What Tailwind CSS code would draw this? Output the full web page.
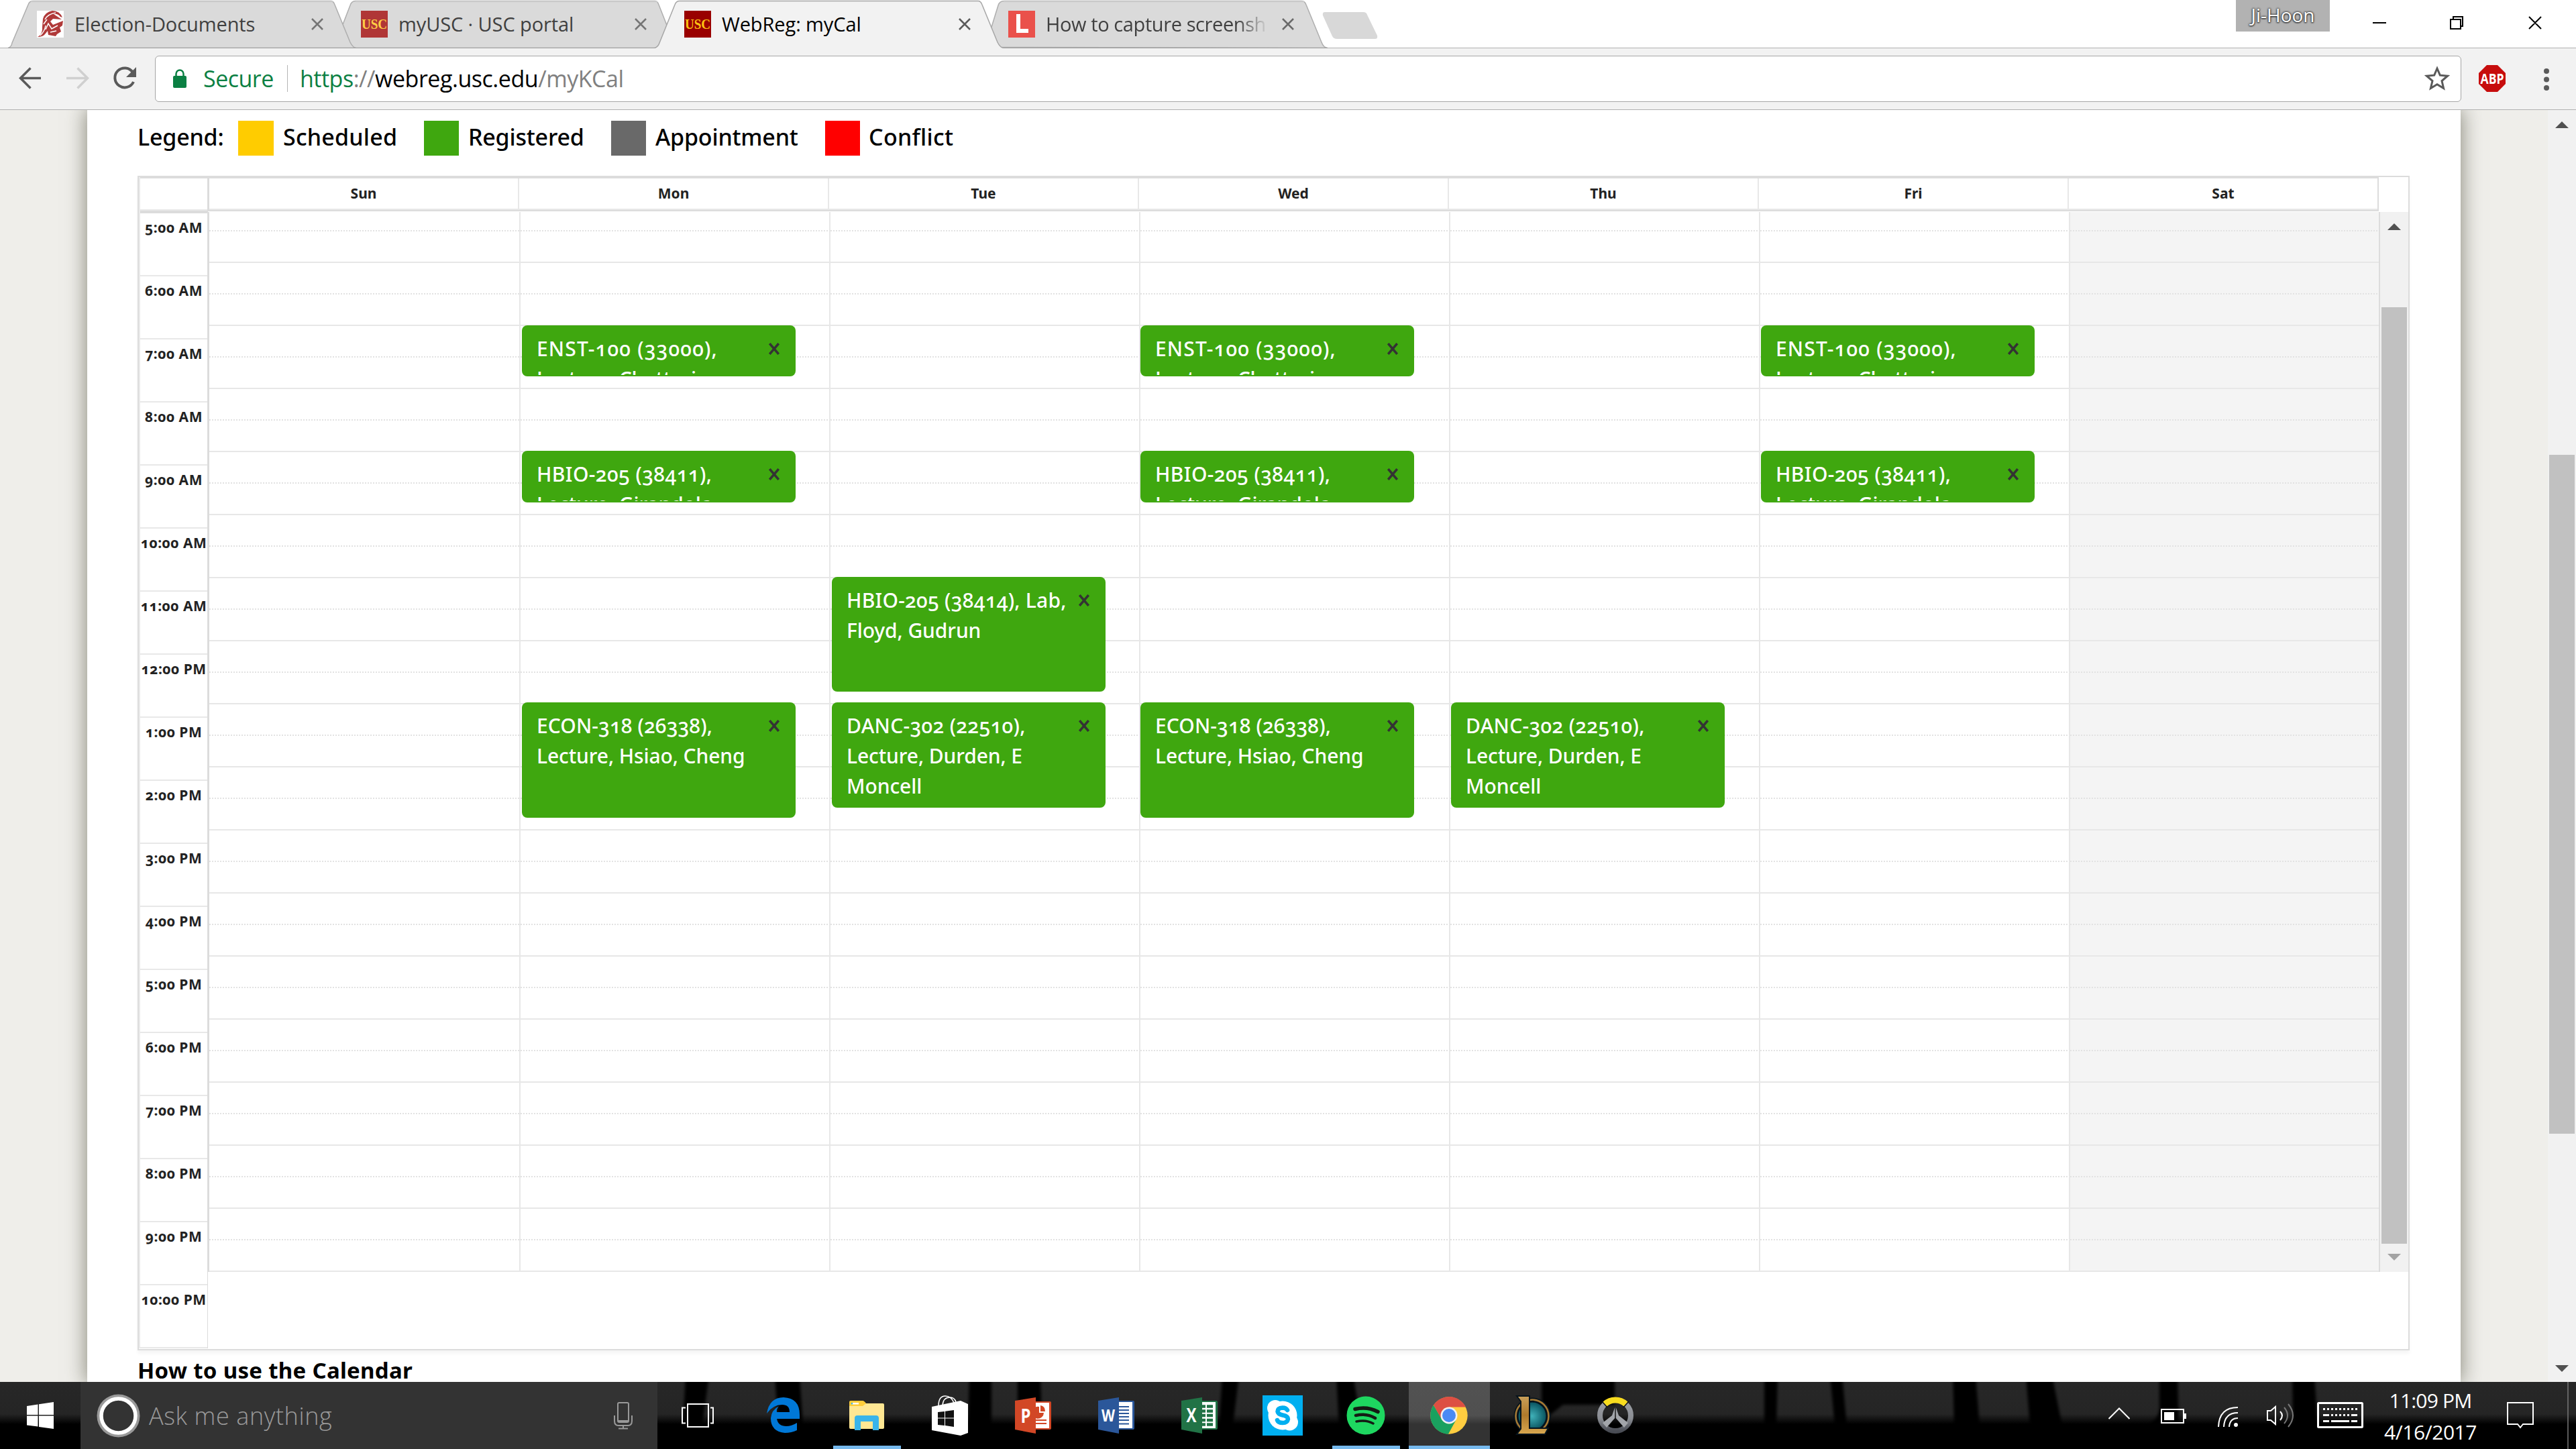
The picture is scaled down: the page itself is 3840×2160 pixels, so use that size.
<!DOCTYPE html>
<html lang="en">
<head>
<meta charset="utf-8">
<title>WebReg: myCal</title>
<script src="https://cdn.jsdelivr.net/npm/@tailwindcss/browser@4"></script>
</head>
<body class="w-[3840px] h-[2160px] overflow-hidden bg-white font-['Open_Sans','Noto_Sans',sans-serif] text-black">
<div class="flex flex-col w-[3840px] h-[2160px]">

  <!-- tab strip -->
  <header class="relative h-[72px] flex-none flex items-center bg-white text-[29px] tracking-[-0.1px] text-[#404040] whitespace-nowrap">
    <svg class="absolute inset-0" width="3840" height="72" viewBox="0 0 3840 72">
      <path d="M0 71.5H3840" stroke="#b0b0b0"/>
      <path d="M1463 70.5C1469 70 1470 67 1471 63L1488 8Q1490 1.500 1497 1.500H1940Q1945 1.500 1947 7L1970 63Q1973 71 1979 71.500Z" fill="#dadada" stroke="#aeaeae" stroke-width="1.500"/>
      <path d="M498 70.500L522 8Q524 1.500 530 1.500H976Q980 1.500 982 7L1004 63L1012 71.500H498Z" fill="#dadada" stroke="#aeaeae" stroke-width="1.500"/>
      <path d="M12 71.500Q17 70 18 64L42 7Q44 1.500 49 1.500H493Q497 1.500 499 7L522 63Q526 71 531 71.500Z" fill="#dadada" stroke="#aeaeae" stroke-width="1.500"/>
      <path d="M46 2.500H496M530 2.500H980M1496 2.500H1944" stroke="#cfcfcf" stroke-width="2"/>
      <path d="M12 71.500H980M1495 71.500H1979" stroke="#9c9c9c"/>
      <path d="M976 72Q981 70 983 64L1006 7Q1008 1.500 1013 1.500H1458Q1462 1.500 1464 7L1487 63Q1491 71 1496 72V73H976Z" fill="#f2f2f2"/>
      <path d="M976 71.500Q981 70 983 64L1006 7Q1008 1.500 1013 1.500H1458Q1462 1.500 1464 7L1487 63Q1491 71 1496 71.500" fill="none" stroke="#a6a6a6" stroke-width="1.500"/>
      <path d="M1975 18H2032Q2037 18 2038 22L2053 53Q2054 58 2050 58H1993Q1988 58 1986 54L1972 23Q1971 18 1975 18Z" fill="#d8d8d8"/>
    </svg>
    <div class="relative flex items-center ml-[55px] w-[483px]">
      <svg class="w-10 h-10 mr-4" viewBox="0 0 40 40"><path fill="#fff" d="M0 0H40V40H0Z"/><path fill="#b03a3a" d="M1 39Q9 35 8 24L9 12Q12 2 23 0Q34 0 38 10L35 9Q31 4 25 5L37 13L24 12L20 16L24 21L39 15L38 22L34 25L36 31L30 35L28 38L17 36L16 30L12 35Q9 39 1 39Z"/><path stroke="#fff" stroke-width="1.500" fill="none" d="M12 13Q16 5 28 3M13 28L17 19L22 27L31 22M20 32L29 30M10 20L15 13M5 37Q12 30 13 22"/></svg>
      <span>Election-Documents</span>
      <svg class="absolute left-[408px] w-5 h-5" viewBox="0 0 20 20"><path d="M2 2L18 18M18 2L2 18" stroke="#757575" stroke-width="2.500"/></svg>
    </div>
    <div class="relative flex items-center w-[482px]">
      <svg class="w-10 h-10 mr-4" viewBox="0 0 40 40"><path fill="#b03636" d="M0 0H40V40H0Z"/><text x="20" y="27" text-anchor="middle" font-family="Liberation Serif" font-weight="700" font-size="21" textLength="38" lengthAdjust="spacingAndGlyphs" fill="#ffce45">USC</text></svg>
      <span>myUSC · USC portal</span>
      <svg class="absolute left-[407px] w-5 h-5" viewBox="0 0 20 20"><path d="M2 2L18 18M18 2L2 18" stroke="#757575" stroke-width="2.500"/></svg>
    </div>
    <div class="relative flex items-center w-[483px] text-black">
      <svg class="w-10 h-10 mr-4" viewBox="0 0 40 40"><path fill="#990000" d="M0 0H40V40H0Z"/><text x="20" y="27" text-anchor="middle" font-family="Liberation Serif" font-weight="700" font-size="21" textLength="38" lengthAdjust="spacingAndGlyphs" fill="#ffc312">USC</text></svg>
      <span>WebReg: myCal</span>
      <svg class="absolute left-[408px] w-5 h-5" viewBox="0 0 20 20"><path d="M2 2L18 18M18 2L2 18" stroke="#5a5a5a" stroke-width="2.500"/></svg>
    </div>
    <div class="relative flex items-center w-[483px]">
      <svg class="w-10 h-10 mr-4 flex-none" viewBox="0 0 40 40"><path fill="#ea514b" d="M0 0H40V40H0Z"/><path fill="#fff" d="M12 5H18V27H30V33H12Z"/></svg>
      <span class="w-[332px] tracking-[-0.4px] [mask-image:linear-gradient(90deg,#000_285px,transparent_332px)]">How to capture screensh</span>
      <svg class="absolute left-[407px] w-5 h-5" viewBox="0 0 20 20"><path d="M2 2L18 18M18 2L2 18" stroke="#6a6a6a" stroke-width="2.500"/></svg>
    </div>
    <div class="relative ml-auto self-start flex">
      <div class="w-[140px] h-[47px] bg-[#b2b2b2] text-white text-[28px] leading-[44px] tracking-normal text-center [text-shadow:0_0_3px_#333,0_0_3px_#333,0_1px_2px_#333]">Ji-Hoon</div>
      <svg width="367" height="68" viewBox="3473 0 367 68" fill="none" stroke="#000" stroke-width="2"><path d="M3537 34H3557M3653 29H3668V43H3653ZM3657 29V25H3671V39H3668M3770 25L3788 43M3788 25L3770 43"/></svg>
    </div>
  </header>

  <!-- toolbar -->
  <div class="h-[92px] flex-none flex items-center bg-[#f2f2f2] border-b border-[#b0b0b0] text-[34px] pb-px">
    <svg class="flex-none" width="231" height="68" viewBox="0 83 231 68" fill="none" stroke-width="3.500"><path stroke="#5a5a5a" d="M61 116.500H31M45.500 101.500L30.500 116.500L45.500 131.500"/><path stroke="#d0d0d0" d="M99 116.500H130M115.500 101.500L130.500 116.500L115.500 131.500"/><path stroke="#5a5a5a" stroke-width="4" d="M198 108A14.500 14.500 0 1 0 199 122"/><path fill="#5a5a5a" d="M203 100V115H188Z"/></svg>
    <div class="flex items-center w-[3438px] h-[69px] bg-white border border-[#a6a6a6] rounded-[6px]">
      <svg class="ml-[25px] mr-6" width="22" height="28" viewBox="0 0 22 28"><path fill="#0b8043" d="M3 10H19Q21 10 21 12V26Q21 28 19 28H3Q1 28 1 26V12Q1 10 3 10Z"/><path d="M5.500 11V7A5.500 5.500 0 0 1 16.500 7V11" fill="none" stroke="#0b8043" stroke-width="2.500"/></svg>
      <span class="text-[#0b8043] tracking-[-0.5px]">Secure</span>
      <i class="block w-px h-10 bg-[#b5b5b5] ml-[20px] mr-[18px]"></i>
      <span class="tracking-[-0.47px]"><span class="text-[#0b8043]">https</span><span class="text-[#808080]">://</span>webreg.usc.edu<span class="text-[#808080]">/myKCal</span></span>
      <svg class="ml-auto mr-4" width="38" height="38" viewBox="0 0 38 38" fill="none" stroke="#5a5a5a" stroke-width="3"><path d="M19 4L23.300 14.200L34.500 15.200L26 22.600L28.600 33.500L19 27.700L9.400 33.500L12 22.600L3.500 15.200L14.700 14.200Z"/></svg>
    </div>
    <svg class="flex-none" width="171" height="68" viewBox="3669 83 171 68"><path fill="#c70d0d" d="M3707 97H3723L3735 109V125L3723 137H3707L3695 125V109Z"/><text x="3715" y="124.500" text-anchor="middle" font-family="Open Sans" font-weight="700" font-size="21" textLength="35" lengthAdjust="spacingAndGlyphs" fill="#fff">ABP</text><g fill="#5a5a5a"><circle cx="3796" cy="106" r="4"/><circle cx="3796" cy="118.500" r="4"/><circle cx="3796" cy="131" r="4"/></g></svg>
  </div>

  <!-- page -->
  <main class="h-[1896px] flex-none flex bg-[#efeeea] overflow-hidden font-['Noto_Sans',sans-serif] oldstyle-nums">
    <div class="relative ml-[130px] w-[3538px] flex-none bg-white pl-[75px] shadow-[0_0_28px_2px_rgba(60,60,40,0.55)]">
      <div class="flex items-center h-[98px] text-[34px] font-medium pb-[14px] whitespace-nowrap">
        <span class="w-[150px] -mt-1 tracking-[-0.2px]">Legend:</span>
        <i class="w-[53px] h-[52px] bg-[#ffcc00]"></i><span class="w-[224px] pl-[14px] -mt-1 tracking-[0.2px]">Scheduled</span>
        <i class="w-[52px] h-[52px] bg-[#3fa70f]"></i><span class="w-[227px] pl-[14px] -mt-1 tracking-[-0.2px]">Registered</span>
        <i class="w-[52px] h-[52px] bg-[#696969]"></i><span class="w-[267px] pl-[14px] -mt-1 tracking-[-0.2px]">Appointment</span>
        <i class="w-[52px] h-[52px] bg-[#ff0000]"></i><span class="pl-[13px] -mt-1 tracking-[0.3px]">Conflict</span>
      </div>

      <section class="flex w-[3387px] h-[1751px] border-2 border-[#dcdcdc] shadow-[0_5px_5px_rgba(0,0,0,0.04)]">
        <!-- hour labels -->
        <div class="w-[103px] flex-none h-[1746px] border-l-2 border-l-[#eaeaea] border-r border-r-[#dcdcdc]">
          <div class="h-[54px] border-t-2 border-b-4 border-[#dcdcdc]"><div class="h-[48px] border-b-2 border-[#e8e8e8]"></div></div>
          <div id="hours" class="text-[21px] tracking-[0.5px] font-bold text-[#222] whitespace-nowrap"></div>
        </div>
        <div class="w-[3238px] flex-none">
          <div id="days" class="flex h-[51px] w-[3236px] border-t-2 border-b-2 border-r-2 border-l-2 border-[#dcdcdc] text-[21px] font-bold text-[#222]"></div>
          <div id="grid" class="flex mt-px h-[1580px] w-[3238px] border-l-2 border-[#dcdcdc] text-white text-[30px] font-medium leading-[45px]"></div>
        </div>
        <!-- calendar scrollbar -->
        <div class="w-[42px] h-[1580px] mt-[52px] bg-[#f1f1f1]">
          <svg width="42" height="1580" viewBox="0 0 42 1580"><path fill="#505050" d="M11 27L21 17L31 27Z"/><path fill="#c1c1c1" d="M2 142H40V1538H2Z"/><path fill="#a3a3a3" d="M11 1553H31L21 1563Z"/></svg>
        </div>
      </section>
      <h2 class="mt-[7px] text-[33px] leading-[46px] font-bold tracking-[0.3px]">How to use the Calendar</h2>
    </div>
    <svg class="ml-auto flex-none" width="42" height="1896" viewBox="0 164 42 1896"><path fill="#f1f1f1" d="M0 164H42V2060H0Z"/><path fill="#505050" d="M11 191L21 181L31 191ZM11 2035H31L21 2045Z"/><path fill="#c1c1c1" d="M2 678H40V1690H2Z"/></svg>
  </main>

  <!-- taskbar -->
  <footer class="relative h-[100px] flex-none flex bg-black text-white">
    <svg class="absolute inset-0" width="3840" height="100" viewBox="0 2060 3840 100">
      <defs>
        <linearGradient id="g" x1="0" y1="0" x2="0" y2="1"><stop offset="0" stop-color="#272727"/><stop offset=".48" stop-color="#252525"/><stop offset=".63" stop-color="#000"/></linearGradient>
        <filter id="b" x="-5%" y="-20%" width="110%" height="140%"><feGaussianBlur stdDeviation="2"/></filter>
      </defs>
      <path fill="url(#g)" d="M0 2060H3840V2160H0Z"/>
      <path filter="url(#b)" d="M1022 2050H1057L1047 2125H1018ZM1155 2050H1192L1197 2125H1160ZM1445 2050H1478V2125H1443ZM1517 2050H1551L1553 2125H1517ZM1822 2050H1847L1838 2125H1817ZM1992 2050H2017L2030 2125H1996ZM2298 2050H2407V2094H2330L2310 2110L2306 2125H2298ZM2630 2050H2650L2648 2125H2630ZM2728 2050H2746L2753 2125H2735ZM2911 2050H2945L2951 2125H2913ZM3020 2050H3059L3074 2125H3026ZM3219 2050H3246L3248 2125H3202Q3218 2115 3219 2100ZM3417 2050H3450L3455 2125H3418Z"/>
    </svg>
    <svg class="relative flex-none" width="120" height="100" viewBox="0 2060 120 100"><path fill="#fff" d="M40 2096L56.500 2093.500V2109H40ZM58 2093.200L80 2090V2109H58ZM40 2110.500H56.500V2126.500L40 2124.500ZM58 2110.500H80V2130L58 2127Z"/></svg>
    <div class="relative w-[860px] flex-none flex items-center bg-[#333] text-[#9a9a9a] text-[36px]">
      <svg width="102" height="100" viewBox="120 2060 102 100"><circle cx="176.500" cy="2110.500" r="32" fill="#999"/><circle cx="176.500" cy="2110.500" r="25.500" fill="#333" stroke="#fff" stroke-width="5.500"/></svg>
      <span class="pt-[2px] font-light tracking-[0.6px]">Ask me anything</span>
      <svg class="ml-auto" width="100" height="100" viewBox="880 2060 100 100" fill="none" stroke="#999" stroke-width="2"><rect x="921" y="2091" width="16" height="29" rx="2"/><path d="M916 2110V2118Q916 2125 922 2125H936Q942 2125 942 2118V2110M929 2125V2129M922 2129.500H936M921 2118H937"/></svg>
    </div>
    <svg class="relative flex-none" width="126" height="100" viewBox="980 2060 126 100" fill="none" stroke="#fff" stroke-width="2"><rect x="1025" y="2093" width="31" height="34"/><path d="M1022 2098.500H1017V2121.500H1022M1059 2098.500H1063V2121.500H1059"/></svg>
    <svg class="relative flex-none" width="124" height="100" viewBox="1106 2060 124 100"><path fill="#0078d7" d="M1143 2107Q1147 2083 1168 2083Q1192 2084 1192 2109V2115H1158Q1160 2126 1172 2126Q1180 2126 1188 2121V2132Q1180 2136 1170 2136Q1149 2134 1149 2114Q1150 2102 1161 2096Q1157 2101 1158 2105H1177Q1177 2094 1166 2094Q1152 2094 1143 2107Z"/></svg>
    <svg class="relative flex-none" width="124" height="100" viewBox="1230 2060 124 100"><path fill="#ffcd3a" d="M1266 2090Q1266 2088 1268 2088H1286Q1288 2088 1291 2092L1292 2097H1266Z"/><path fill="#ffe793" d="M1266 2096H1286L1291 2092H1316Q1318 2092 1318 2094V2128Q1318 2130 1316 2130H1268Q1266 2130 1266 2128Z"/><path fill="#fff" d="M1269 2091H1280V2093.500H1269Z"/><path fill="#39b4ea" d="M1269 2091H1271V2093.500H1269ZM1274 2132V2114Q1274 2110 1278 2110H1306Q1310 2110 1310 2114V2132H1301V2119H1283V2132Z"/><path fill="#76b9ed" d="M1242 2155H1343V2160H1242Z"/></svg>
    <svg class="relative flex-none" width="124" height="100" viewBox="1354 2060 124 100"><path fill="#fff" d="M1389 2097L1432 2088L1443 2093V2136L1432 2140L1389 2132Z"/><path fill="none" stroke="#fff" stroke-width="1.600" d="M1399 2096Q1399 2081 1409 2081Q1418 2081 1422 2091M1405 2095Q1406 2083 1416 2083Q1423 2083 1425 2090"/><path fill="#111" d="M1398 2105L1408 2104V2113.500H1398ZM1409 2103.800L1422 2102V2113.500H1409ZM1398 2114.500H1408V2125L1398 2124ZM1409 2114.500H1422V2127L1409 2125Z"/></svg>
    <svg class="relative flex-none" width="124" height="100" viewBox="1478 2060 124 100"><rect x="1540" y="2089" width="27" height="42" rx="2" fill="#d24726"/><path fill="#fff" d="M1543 2091H1564V2129H1543Z"/><path fill="#d24726" d="M1549 2097A9 9 0 1 0 1556 2106H1549ZM1551 2095V2104H1558Q1558 2096 1551 2095ZM1544 2116H1560V2118H1544ZM1544 2121H1560V2123H1544Z"/><path fill="#d24726" d="M1513 2088L1544 2083V2137L1513 2131Z"/><text x="1529" y="2121" text-anchor="middle" font-family="Open Sans" font-weight="700" font-size="29" textLength="15" lengthAdjust="spacingAndGlyphs" fill="#fff">P</text></svg>
    <svg class="relative flex-none" width="124" height="100" viewBox="1602 2060 124 100"><rect x="1664" y="2088" width="27" height="43" rx="2" fill="#2b579a"/><path fill="#fff" d="M1667 2090H1688V2129H1667Z"/><path stroke="#2b579a" stroke-width="2.200" d="M1664 2097H1683M1664 2102H1683M1664 2107H1683M1664 2112H1683M1664 2117H1683M1664 2122.500H1683"/><path fill="#2b579a" d="M1637 2088L1668 2083V2137L1637 2131Z"/><text x="1652" y="2119" text-anchor="middle" font-family="Open Sans" font-weight="700" font-size="25" textLength="20" lengthAdjust="spacingAndGlyphs" fill="#fff">W</text></svg>
    <svg class="relative flex-none" width="124" height="100" viewBox="1726 2060 124 100"><rect x="1788" y="2088" width="27" height="43" rx="2" fill="#217346"/><path fill="#fff" d="M1791 2090H1812V2129H1791Z"/><path stroke="#217346" stroke-width="4.500" d="M1790 2096.500H1797M1790 2103.500H1797M1790 2110H1797M1790 2117H1797M1790 2123.500H1797M1799 2096.500H1808M1799 2103.500H1808M1799 2110H1808M1799 2117H1808M1799 2123.500H1808"/><path fill="#217346" d="M1761 2088L1792 2083V2137L1761 2131Z"/><text x="1776" y="2120" text-anchor="middle" font-family="Open Sans" font-weight="700" font-size="28" textLength="15" lengthAdjust="spacingAndGlyphs" fill="#fff">X</text></svg>
    <svg class="relative flex-none" width="124" height="100" viewBox="1850 2060 124 100"><path fill="#00aff0" d="M1882 2080H1942V2140H1882Z"/><circle cx="1912" cy="2110" r="21.500" fill="#fff"/><circle cx="1901" cy="2099" r="12" fill="#fff"/><circle cx="1922.500" cy="2120" r="12.500" fill="#fff"/><path fill="none" stroke="#00aff0" stroke-width="6.500" stroke-linecap="round" d="M1919 2102Q1917 2098.500 1912 2098.500Q1904.500 2099 1904.500 2104Q1905 2108 1912 2109.500Q1920 2111 1920 2115.500Q1919 2121 1912 2121Q1905.500 2121 1904 2117"/></svg>
    <svg class="relative flex-none" width="124" height="100" viewBox="1974 2060 124 100"><circle cx="2036" cy="2110" r="28.500" fill="#1ed760"/><path fill="none" stroke="#141a14" stroke-linecap="round" d="M2020 2100.500Q2038 2096 2054 2104.500" stroke-width="5.500"/><path fill="none" stroke="#141a14" stroke-linecap="round" d="M2021 2110Q2037 2106 2050 2114" stroke-width="4.500"/><path fill="none" stroke="#141a14" stroke-linecap="round" d="M2022 2119Q2036 2116 2047 2122" stroke-width="3.500"/><path fill="#76b9ed" d="M1986 2155H2087V2160H1986Z"/></svg>
    <svg class="relative flex-none" width="124" height="100" viewBox="2098 2060 124 100"><defs><linearGradient id="c" x1="0" y1="0" x2="0" y2="1"><stop offset="0" stop-color="#525252"/><stop offset=".5" stop-color="#505050"/><stop offset=".63" stop-color="#333"/></linearGradient></defs><path fill="url(#c)" d="M2100 2060H2221V2160H2100Z"/><path fill="#76b9ed" d="M2100 2155H2221V2160H2100Z"/><circle cx="2160" cy="2110" r="27.700" fill="#ffcd40"/><path fill="#1aa15f" d="M2137 2094.500A27.700 27.700 0 0 0 2159 2137.700L2170.500 2116.500L2149.500 2116Z"/><path fill="#dd4f43" d="M2137 2094.500A27.700 27.700 0 0 1 2185 2097.500H2160L2148 2114Z"/><circle cx="2160" cy="2110" r="12.500" fill="#f1f1f1"/><circle cx="2160" cy="2110" r="10" fill="#4a8af4"/></svg>
    <svg class="relative flex-none" width="124" height="100" viewBox="2222 2060 124 100"><defs><radialGradient id="t"><stop offset="0" stop-color="#3fb0b8"/><stop offset="1" stop-color="#0a5561"/></radialGradient><linearGradient id="o" x1="0" y1="0" x2="0" y2="1"><stop offset="0" stop-color="#c9a05a"/><stop offset=".5" stop-color="#b07a2c"/><stop offset="1" stop-color="#d9a850"/></linearGradient></defs><circle cx="2284" cy="2111" r="27.500" fill="#06131c"/><circle cx="2284" cy="2111" r="24.500" fill="#06131c" stroke="#a67a35" stroke-width="2.600"/><circle cx="2284" cy="2111" r="20.500" fill="url(#t)"/><path fill="url(#o)" stroke="#06131c" stroke-width="2" d="M2261 2081H2280V2129H2308L2303 2138H2261L2267 2130V2089Z"/></svg>
    <svg class="relative flex-none" width="124" height="100" viewBox="2346 2060 124 100"><defs><linearGradient id="s" x1="0" y1="0" x2="0" y2="1"><stop offset="0" stop-color="#9da0a6"/><stop offset=".6" stop-color="#8a8d93"/><stop offset="1" stop-color="#4a4d55"/></linearGradient></defs><circle cx="2408" cy="2110" r="23" fill="none" stroke="url(#s)" stroke-width="8"/><path fill="none" stroke="#f8dc1e" stroke-width="9" d="M2392.500 2093A23 23 0 0 1 2423.500 2093"/><path d="M2388 2089L2396 2098M2428 2089L2420 2098" stroke="#111" stroke-width="1.500"/><path fill="#a2a5aa" d="M2407.200 2098V2114L2395 2128L2389 2121L2403 2110ZM2408.800 2098V2114L2421 2128L2427 2121L2413 2110Z"/></svg>
    <svg class="relative flex-none ml-auto" width="420" height="100" viewBox="3125 2060 420 100" fill="none" stroke="#fff" stroke-width="2"><path d="M3143.500 2115L3159 2099.500L3174.500 2115"/><path d="M3222 2101H3255V2121H3222Z"/><path fill="#fff" stroke="none" d="M3226 2105H3241V2117H3226ZM3256 2107H3259V2115H3256Z"/><path d="M3307 2127Q3308 2098 3336 2098M3315 2127Q3316 2106 3336 2106M3323 2127Q3324 2114 3336 2114"/><circle cx="3333" cy="2124" r="3" fill="#fff" stroke="none"/><path d="M3380 2103H3385L3392 2097V2123L3385 2117H3380ZM3399 2104Q3405 2110 3399 2117"/><path stroke="#777" d="M3405 2098Q3415 2110 3405 2122M3411 2093Q3425 2110 3411 2127"/><rect x="3455.500" y="2091.500" width="66" height="36" rx="1" stroke-width="3"/><path stroke-width="3" stroke-dasharray="3 3" d="M3463 2100.500H3514M3475 2109.500H3503"/><path stroke-width="3" d="M3463 2109.500H3472M3505 2109.500H3514M3463 2118.500H3472M3475 2118.500H3502M3505 2118.500H3514"/></svg>
    <div class="relative w-[156px] flex-none flex flex-col items-center justify-center text-[30px] leading-[47px] pt-[2px]"><span class="tracking-[-0.8px]">11:09 PM</span><span class="tracking-[-0.45px]">4/16/2017</span></div>
    <svg class="relative flex-none" width="139" height="100" viewBox="3701 2060 139 100" fill="none" stroke="#fff" stroke-width="2"><path d="M3738 2091H3776V2123H3761L3757 2128L3753 2123H3738Z"/><path stroke="#777" stroke-width="1.500" d="M3828 2060V2160"/></svg>
  </footer>
</div>

<script>
const hours = ['5:00 AM','6:00 AM','7:00 AM','8:00 AM','9:00 AM','10:00 AM','11:00 AM','12:00 PM','1:00 PM','2:00 PM','3:00 PM','4:00 PM','5:00 PM','6:00 PM','7:00 PM','8:00 PM','9:00 PM','10:00 PM'];
document.getElementById('hours').innerHTML = hours.map(h =>
  `<div class="h-[94px] border-b-2 border-[#e8e8e8] leading-[43px] flex justify-center"><span>${h}</span></div>`).join('');

const days = ['Sun','Mon','Tue','Wed','Thu','Fri','Sat'];
document.getElementById('days').innerHTML = days.map((d, i) =>
  `<div class="flex-1 flex items-center justify-center border-b-2 border-b-[#e8e8e8] ${i ? 'border-l-2 border-l-[#e8e8e8]' : ''}"><span>${d}</span></div>`).join('');

// top and height are offsets in the scrolled day grid
const enst = {top: 169, h: 76, t: '<span class="tracking-[1.15px]">ENST-100 (33000),</span><br>Lecture, Chatterjee'};
const hbio = {top: 356, h: 77, t: '<span class="tracking-[0.4px]">HBIO-205 (38411),</span><br>Lecture, Girandola'};
const econ = {top: 731, h: 172, t: '<span class="tracking-[0.1px]">ECON-318 (26338),</span><br>Lecture, Hsiao, Cheng'};
const danc = {top: 731, h: 157, t: '<span class="tracking-[0.3px]">DANC-302 (22510),</span><br>Lecture, Durden, E<br>Moncell'};
const lab = {top: 544, h: 171, t: '<span class="tracking-[0.25px]">HBIO-205 (38414), Lab,</span><br>Floyd, Gudrun'};
const plan = [[], [enst, hbio, econ], [lab, danc], [enst, hbio, econ], [danc], [enst, hbio], []];
const nudge = [0, 2, 2, 0, 1, 1, 0];
const cells = Array.from({length: 34}, (_, r) =>
  `<div class="${r ? 'h-[47px]' : 'h-[29px]'} flex flex-col justify-end"><i class="block h-[2px] ${r % 2 ? 'bg-[#e7e7e7]' : 'bg-[repeating-linear-gradient(90deg,#e2e2e2_0_2px,transparent_2px_4px)]'}"></i></div>`).join('');
document.getElementById('grid').innerHTML = days.map((d, i) =>
  `<div class="relative flex-none ${i ? 'w-[462px] border-l-2 border-[#e7e7e7]' : 'w-[462px]'} ${i == 6 ? 'bg-[#f4f4f4]' : ''}">${cells}${plan[i].map(e =>
    `<div class="absolute w-[408px] rounded-[8px] bg-[#3fa70f] pt-3 pl-[22px] pr-6 pb-[2px] overflow-hidden tracking-[-0.1px]" style="left:${nudge[i]}px;top:${e.top}px;height:${e.h}px"><div class="h-full overflow-hidden whitespace-nowrap">${e.t}</div><svg class="absolute left-[367px] top-[26px] w-[18px] h-[18px]" viewBox="0 0 16 16"><path d="M2 1L14 15M14 1L2 15" stroke="#333" stroke-width="3.200"/></svg></div>`).join('')}</div>`).join('') + '<i class="block w-[2px] flex-none bg-[#dcdcdc]"></i>';
</script>
</body>
</html>
